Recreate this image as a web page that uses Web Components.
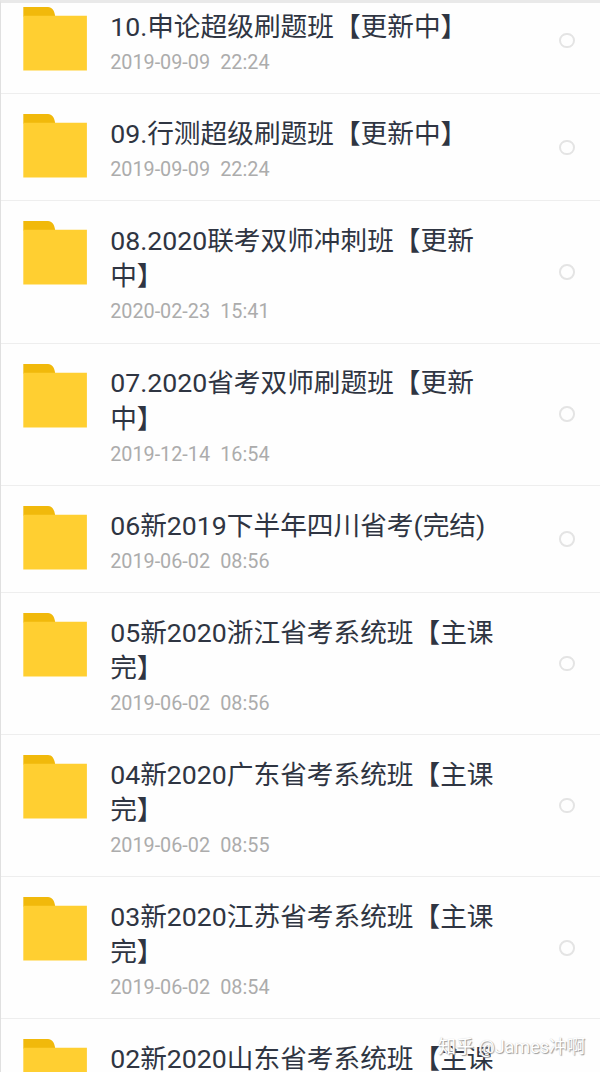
<!DOCTYPE html>
<html lang="zh-CN">
<head>
<meta charset="utf-8">
<title>文件列表</title>
<style>
html,body{margin:0;height:1072px;overflow:hidden;background:#fefefe}
body{font-family:Roboto,"Noto Sans CJK SC",sans-serif}
</style>
</head>
<body>
<file-list>
<file-row date="2019-09-09" time="22:24">10.申论超级刷题班【更新中】</file-row>
<file-row date="2019-09-09" time="22:24">09.行测超级刷题班【更新中】</file-row>
<file-row date="2020-02-23" time="15:41">08.2020联考双师冲刺班【更新中】</file-row>
<file-row date="2019-12-14" time="16:54">07.2020省考双师刷题班【更新中】</file-row>
<file-row date="2019-06-02" time="08:56">06新2019下半年四川省考(完结)</file-row>
<file-row date="2019-06-02" time="08:56">05新2020浙江省考系统班【主课完】</file-row>
<file-row date="2019-06-02" time="08:55">04新2020广东省考系统班【主课完】</file-row>
<file-row date="2019-06-02" time="08:54">03新2020江苏省考系统班【主课完】</file-row>
<file-row date="2019-06-02" time="08:54">02新2020山东省考系统班【主课完】</file-row>
<water-mark slot="overlay">知乎 @James冲啊</water-mark>
</file-list>
<script>
const define = (name, html, setup) => customElements.define(name, class extends HTMLElement {
  constructor() {
    super();
    this.attachShadow({mode: 'open'}).innerHTML = html;
    if (setup) setup(this);
  }
});

define('folder-icon', `
<style>:host{display:block;width:64px;height:64px}svg{display:block}</style>
<svg width="64" height="64" viewBox="0 0 64 64">
<path d="M.3 0H25C29 0 31.4 3.5 32.2 9.5H.3Z" fill="#f1b90b"/>
<path d="M.3 8.8H63.9V63.4H.3Z" fill="#ffcf31"/>
</svg>`);

define('select-dot', `
<style>:host{display:block;box-sizing:border-box;width:15.6px;height:15.6px;border:2px solid #e4e4e4;border-radius:50%}</style>`);

define('file-row', `
<style>
:host{display:grid;grid-template-columns:64px 388px 1fr;column-gap:23.2px;box-sizing:border-box;padding:20px 25px 11.7px 22px;border-bottom:1px solid #eee}
.body{padding-top:2.8px}
.title{font-size:26.68px;line-height:35.15px;color:#2f3542}
.date{display:flex;gap:10.2px;margin-top:2.8px;padding-bottom:3.4px;font-size:19.8px;line-height:30.2px;color:#acacac}
select-dot{align-self:center;justify-self:end;margin-top:-8.4px}
</style>
<folder-icon></folder-icon>
<div class="body"><div class="title"><slot></slot></div><div class="date"><span class="d"></span><span class="t"></span></div></div>
<select-dot></select-dot>`, el => {
  el.shadowRoot.querySelector('.d').textContent = el.getAttribute('date');
  el.shadowRoot.querySelector('.t').textContent = el.getAttribute('time');
});

define('water-mark', `
<style>:host{display:block;white-space:nowrap;font-size:18px;line-height:26px;color:#fff;text-shadow:1px 1px 1px #999,0 0 1px #ccc}</style><slot></slot>`);

define('file-list', `
<style>
:host{display:block;position:relative;box-sizing:border-box;height:1072px;overflow:hidden;border-left:1px solid #e0e0e0;border-top:3px solid #e9e9e9}
.rows{margin-top:-15.6px}
.overlay{position:absolute;right:15px;bottom:12px}
</style>
<div class="rows"><slot></slot></div>
<div class="overlay"><slot name="overlay"></slot></div>`);
</script>
</body>
</html>
